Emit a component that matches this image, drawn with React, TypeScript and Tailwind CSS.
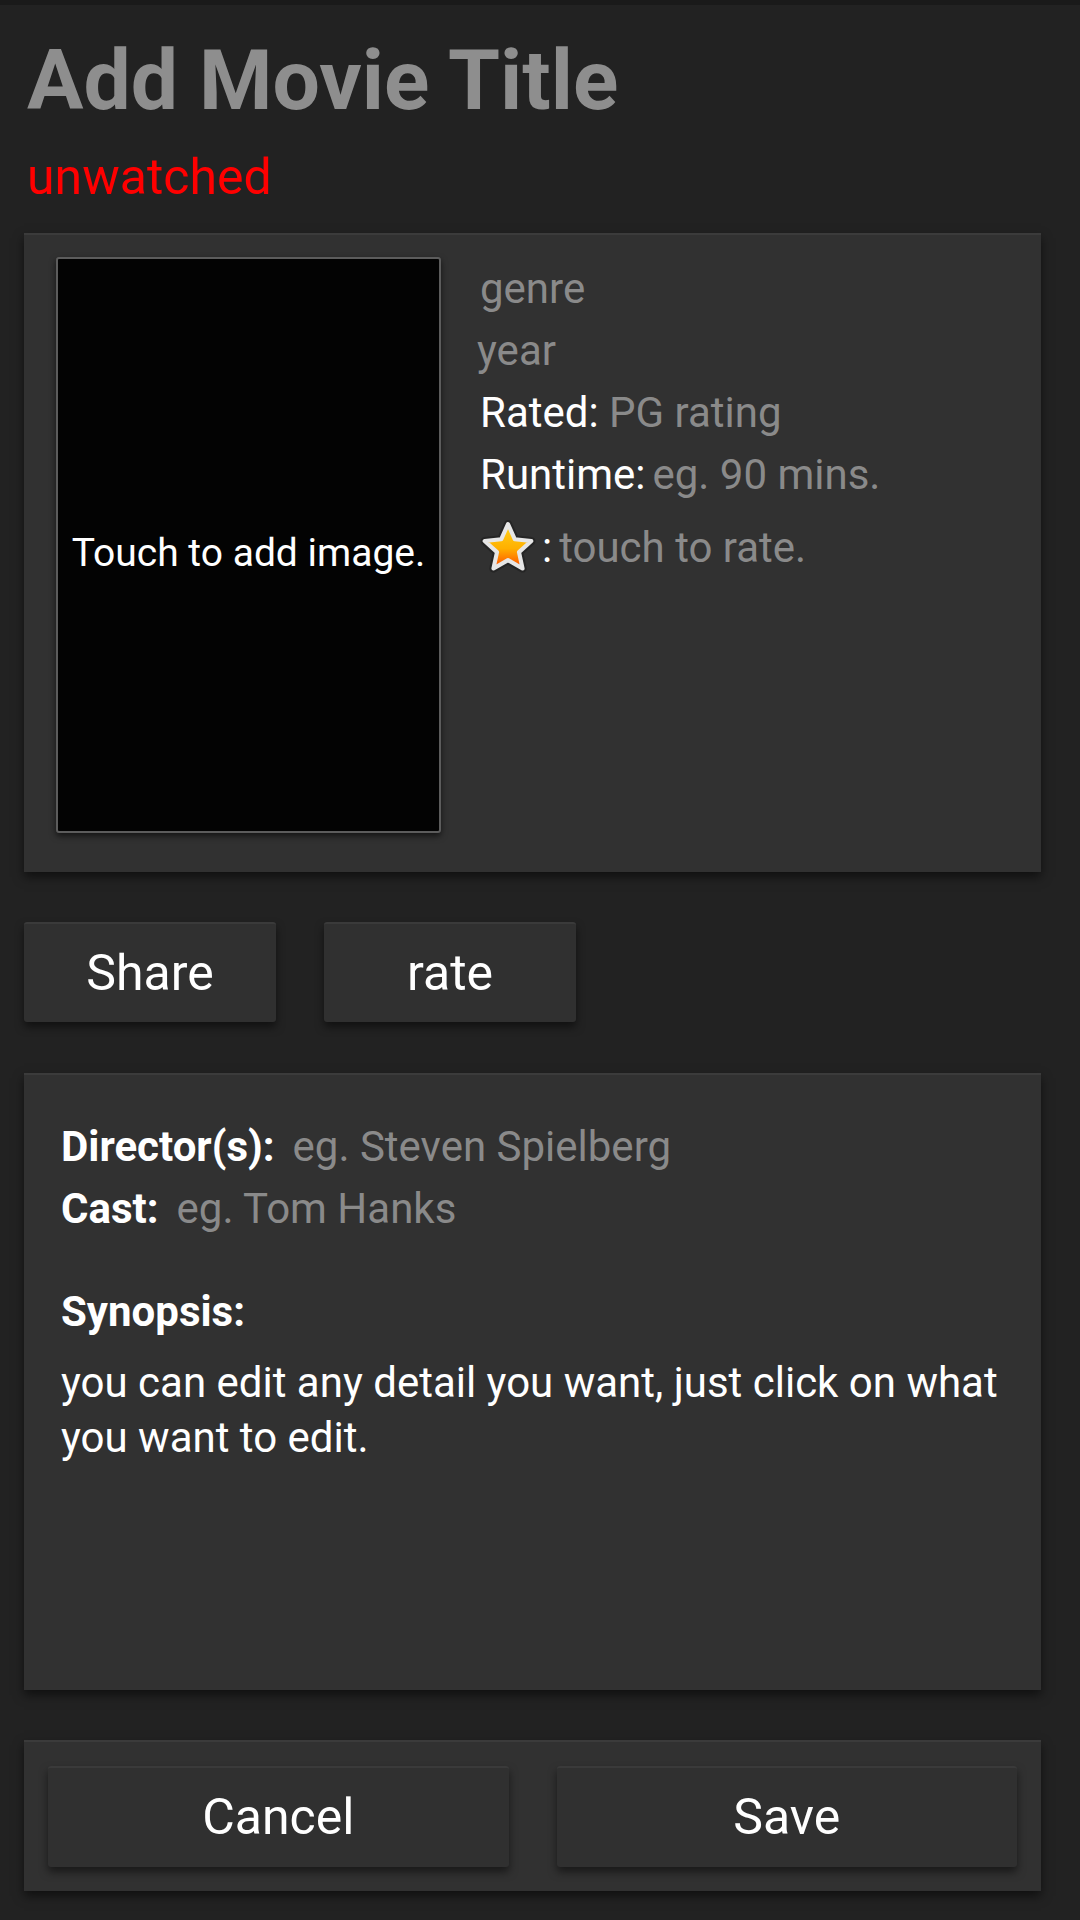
import type { ReactNode } from 'react'

/** Gold rating star with the light bevel outline. */
function RateStar() {
  return (
    <svg width="56" height="56" viewBox="0 0 54 54" className="shrink-0">
      <defs>
        <linearGradient id="starFill" x1="0" y1="0" x2="0" y2="1">
          <stop offset="0" stopColor="#ffd21a" />
          <stop offset="0.55" stopColor="#ffb000" />
          <stop offset="1" stopColor="#ff4a00" />
        </linearGradient>
      </defs>
      <path
        d="M27 4 L33.6 18.6 L49.5 20.3 L37.6 31 L41 46.7 L27 38.7 L13 46.7 L16.4 31 L4.5 20.3 L20.4 18.6 Z"
        fill="none"
        stroke="#1a1a1a"
        strokeOpacity="0.5"
        strokeWidth="8"
        strokeLinejoin="round"
      />
      <path
        d="M27 4 L33.6 18.6 L49.5 20.3 L37.6 31 L41 46.7 L27 38.7 L13 46.7 L16.4 31 L4.5 20.3 L20.4 18.6 Z"
        fill="url(#starFill)"
        stroke="#e6e6e6"
        strokeWidth="4"
        strokeLinejoin="round"
      />
    </svg>
  )
}

function Panel({ className = '', children }: { className?: string; children: ReactNode }) {
  return (
    <section
      className={`border-t-2 border-[#3b3b3b] bg-[#313131] shadow-[0_5px_10px_rgba(0,0,0,0.55)] ${className}`}
    >
      {children}
    </section>
  )
}

function DarkButton({ label, className = '' }: { label: string; className?: string }) {
  return (
    <button
      className={`flex items-center justify-center rounded-[3px] border-t-2 border-[#3a3a3a] bg-[#303030] text-[50px] text-white shadow-[0_5px_8px_rgba(0,0,0,0.5)] ${className}`}
    >
      {label}
    </button>
  )
}

export default function App() {
  return (
    <div className="relative h-[1920px] w-[1080px] overflow-hidden bg-[#222222] font-['Roboto',sans-serif]">
      <div className="h-[5px] bg-[#1a1a1a]" />

      <h1 className="ml-[27px] mt-[26px] text-[84px] font-bold leading-[100px] text-[#8e8e8e]">
        Add Movie Title
      </h1>
      <div className="ml-[27px] mt-[18px] text-[50px] leading-[56px] text-[#ff0000]">unwatched</div>

      {/* poster + basic facts */}
      <Panel className="ml-[24px] mt-[28px] flex h-[639px] w-[1017px] items-start pl-[32px] pt-[22px]">
        <div className="flex h-[576px] w-[385px] shrink-0 items-center justify-center rounded-[3px] border-2 border-[#5c5c5c] bg-[#030303] pt-[16px] text-[39px] text-white shadow-[0_3px_6px_rgba(0,0,0,0.6)]">
          Touch to add image.
        </div>
        <div className="ml-[39px] mt-[1px] text-[42px] leading-[62px]">
          <div className="text-[#8a8a8a]">genre</div>
          <div className="-ml-[3px] text-[#8a8a8a]">year</div>
          <div className="text-white">
            Rated: <span className="text-[#8a8a8a]">PG rating</span>
          </div>
          <div className="text-white">
            Runtime:<span className="ml-[7px] text-[#8a8a8a]">eg. 90 mins.</span>
          </div>
          <div className="mt-[11px] flex items-center">
            <RateStar />
            <span className="ml-[6px] text-white">:</span>
            <span className="ml-[7px] text-[#8a8a8a]">touch to rate.</span>
          </div>
        </div>
      </Panel>

      <div className="ml-[24px] mt-[50px] flex gap-[48px]">
        <DarkButton label="Share" className="h-[100px] w-[252px]" />
        <DarkButton label="rate" className="h-[100px] w-[252px]" />
      </div>

      {/* credits + synopsis */}
      <Panel className="ml-[24px] mt-[51px] h-[617px] w-[1017px] pl-[37px] pr-[16px] pt-[41px] text-[42px]">
        <div className="leading-[62px]">
          <div className="flex">
            <span className="font-bold text-white">Director(s):</span>
            <span className="ml-[18px] text-[#8a8a8a]">eg. Steven Spielberg</span>
          </div>
          <div className="flex">
            <span className="font-bold text-white">Cast:</span>
            <span className="ml-[18px] text-[#8a8a8a]">eg. Tom Hanks</span>
          </div>
        </div>
        <div className="mt-[41px] font-bold leading-[62px] text-white">Synopsis:</div>
        <p className="mt-[12px] leading-[55px] text-white">
          you can edit any detail you want, just click on what you want to edit.
        </p>
      </Panel>

      <Panel className="ml-[24px] mt-[50px] grid w-[1017px] grid-cols-2 gap-[48px] p-[24px]">
        <DarkButton label="Cancel" className="h-[101px]" />
        <DarkButton label="Save" className="h-[101px]" />
      </Panel>
    </div>
  )
}
